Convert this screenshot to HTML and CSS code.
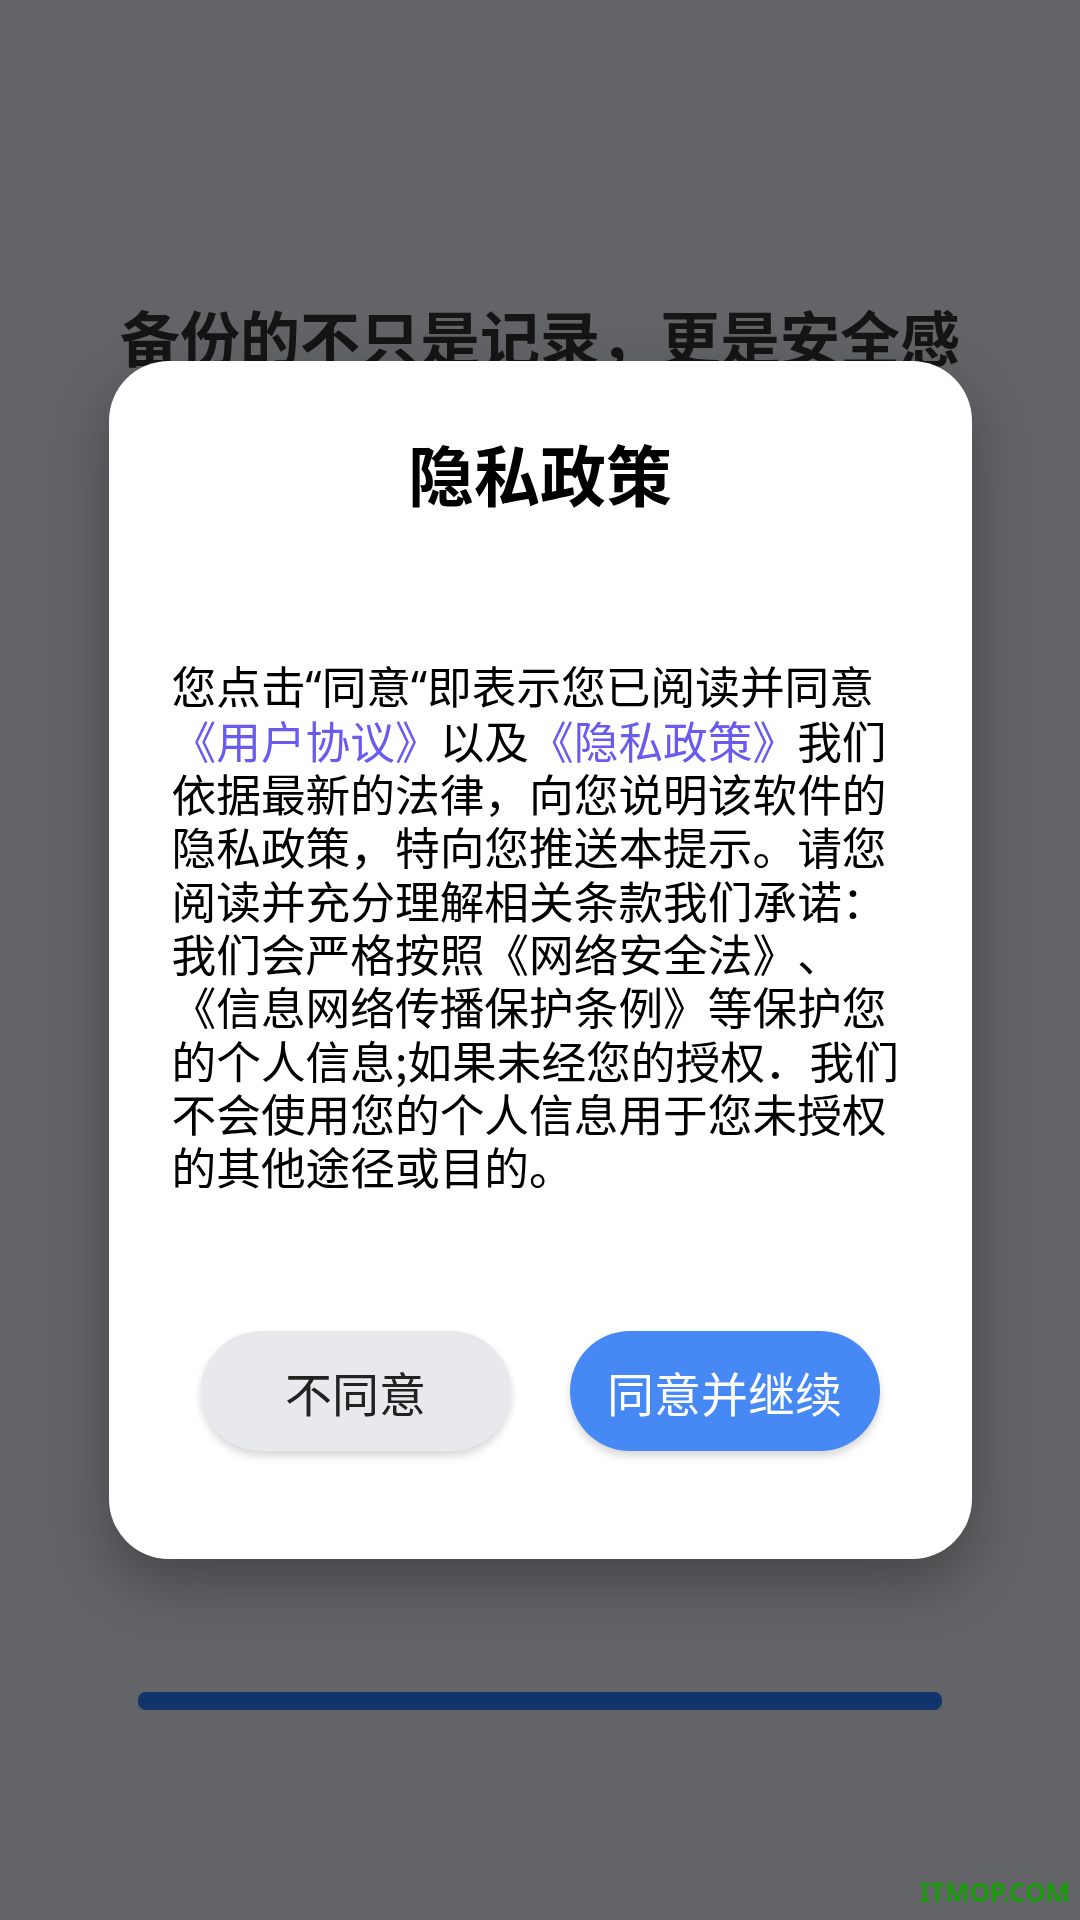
FILE: index.html
```
<!DOCTYPE html>
<html lang="zh-CN">
<head>
    <meta charset="UTF-8">
    <meta name="viewport" content="width=device-width, initial-scale=1.0">
    <title>隐私政策</title>
    <link rel="stylesheet" href="styles.css">
</head>
<body>

    <!-- Welcome screen behind the dialog -->
    <div class="welcome">
        <h1 class="slogan">备份的不只是记录，更是安全感</h1>
        <div class="spacer"></div>
        <div class="progress-bar"></div>
    </div>

    <!-- Privacy dialog -->
    <div class="overlay">
        <div class="dialog">
            <h2 class="dialog-title">隐私政策</h2>
            <p class="dialog-text">您点击<span class="q">“</span>同意<span class="q">“</span>即表示您已阅读并同意<a href="#" class="link">《用户协议》</a>以及<a href="#" class="link">《隐私政策》</a>我们依据最新的法律，向您说明该软件的隐私政策，特向您推送本提示。请您阅读并充分理解相关条款我们承诺：我们会严格按照《网络安全法》、《信息网络传播保护条例》等保护您的个人信息;如果未经您的授权．我们不会使用您的个人信息用于您未授权的其他途径或目的。</p>
            <div class="dialog-buttons">
                <button class="btn btn-decline">不同意</button>
                <button class="btn btn-accept">同意并继续</button>
            </div>
        </div>
    </div>

    <div class="watermark">ITMOP.COM</div>

</body>
</html>
```
FILE: styles.css
```
        body, html {
            margin: 0;
            padding: 0;
            height: 100%;
            font-family: "Noto Sans CJK SC", "Noto Sans", sans-serif;
            background-color: #636467;
        }

        .welcome {
            display: flex;
            flex-direction: column;
            align-items: center;
            height: 100vh;
            box-sizing: border-box;
            padding-top: 300px;
            padding-bottom: 210px;
        }

        .slogan {
            margin: 0;
            font-size: 60px;
            line-height: 72px;
            font-weight: 700;
            color: #151515;
        }

        .spacer {
            flex: 1;
        }

        .progress-bar {
            width: 804px;
            height: 18px;
            border-radius: 8px;
            background-color: #11356a;
        }

        .overlay {
            position: fixed;
            top: 0;
            left: 0;
            width: 100%;
            height: 100%;
            display: flex;
            justify-content: center;
            align-items: center;
        }

        .dialog {
            width: 863px;
            box-sizing: border-box;
            padding: 73px 0 108px 0;
            background-color: #ffffff;
            border-radius: 60px;
            box-shadow: 0 24px 60px rgba(0, 0, 0, 0.3);
            display: flex;
            flex-direction: column;
        }

        .dialog-title {
            margin: 0;
            font-size: 66px;
            line-height: 77px;
            font-weight: 700;
            color: #000000;
            text-align: center;
        }

        .dialog-text {
            margin: 147px 58px 0 63px;
            font-size: 44.7px;
            line-height: 53.3px;
            color: #000000;
            text-spacing-trim: space-all;
        }

        .q {
            font-family: "Noto Sans", sans-serif;
        }

        .link {
            color: #6a5bf0;
            text-decoration: none;
        }

        .dialog-buttons {
            margin-top: 139px;
            display: flex;
            justify-content: center;
            gap: 59px;
        }

        .btn {
            width: 310px;
            height: 120px;
            border: none;
            border-radius: 60px;
            font-family: "Noto Sans CJK SC", sans-serif;
            font-size: 47px;
            box-shadow: 0 5px 8px rgba(0, 0, 0, 0.16);
        }

        .btn-decline {
            background-color: #e8e9ec;
            color: #222222;
        }

        .btn-accept {
            background-color: #4689f5;
            color: #ffffff;
        }

        .watermark {
            position: fixed;
            right: 10px;
            bottom: 10px;
            font-family: "Noto Sans", sans-serif;
            font-size: 26px;
            font-weight: 700;
            color: #1e9a10;
        }
```
